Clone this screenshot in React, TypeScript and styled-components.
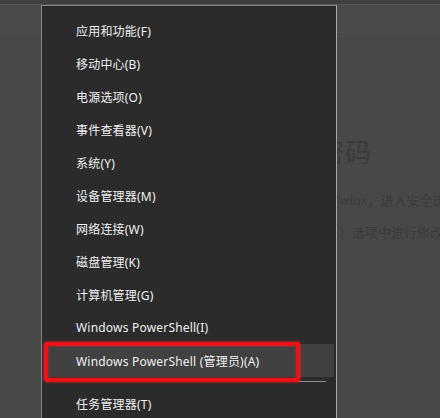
import styled, { createGlobalStyle } from "styled-components";

const GlobalStyle = createGlobalStyle`
  html, body {
    margin: 0;
    padding: 0;
    background: #484848;
  }
  body {
    font-family: "Noto Sans", "Noto Sans CJK SC", sans-serif;
  }
`;

const Page = styled.div`
  position: relative;
  width: 440px;
  height: 418px;
  overflow: hidden;
  background: #484848;
`;

const TopStrip = styled.div`
  height: 4px;
  background: #3f3f3f;
  border-bottom: 1px solid #555555;
`;

const Header = styled.div`
  height: 27px;
  background: #4a4a4a;
  border-bottom: 1px solid #4e4e4e;
`;

const Article = styled.div`
  display: flex;
  flex-direction: column;
  padding: 100px 0 0 318px;
  white-space: nowrap;
  color: #3a3a3a;
  font-family: "Noto Sans CJK SC", sans-serif;
`;

const Title = styled.div`
  font-size: 26px;
  line-height: 36px;
  letter-spacing: 1px;
`;

const Para = styled.div<{ $indent: number; $gap: number }>`
  font-size: 13px;
  line-height: 16px;
  margin-top: ${(p) => p.$gap}px;
  padding-left: ${(p) => p.$indent}px;
  color: #3b3b3b;
`;

const Menu = styled.div`
  position: absolute;
  left: 41px;
  top: 5px;
  width: 296px;
  height: 430px;
  background: #2b2b2b;
  border-left: 1px solid #858585;
  border-top: 1px solid #858585;
  border-right: 1px solid #a8a8a8;
  padding: 8px 2px 0 2px;
  box-sizing: border-box;
  display: flex;
  flex-direction: column;
`;

const Item = styled.div<{ $active?: boolean }>`
  position: relative;
  height: 33px;
  display: flex;
  align-items: center;
  padding-left: 31px;
  margin-left: 1px;
  font-size: 12px;
  letter-spacing: 0.2px;
  color: #f0f0f0;
  background: ${(p) => (p.$active ? "#414141" : "transparent")};
  white-space: nowrap;
`;

const Separator = styled.div`
  height: 1px;
  background: #8c8c8c;
  margin: 4px 8px 5px 16px;
`;

const Marker = styled.div`
  position: absolute;
  left: -1px;
  top: -2px;
  width: 256px;
  height: 40px;
  box-sizing: border-box;
  border: 4px solid #e8121a;
  border-radius: 3px;
  box-shadow: 0 0 3px #ff2020, inset 0 0 2px #ff2020;
`;

const items = [
  "应用和功能(F)",
  "移动中心(B)",
  "电源选项(O)",
  "事件查看器(V)",
  "系统(Y)",
  "设备管理器(M)",
  "网络连接(W)",
  "磁盘管理(K)",
  "计算机管理(G)",
  "Windows PowerShell(I)",
];

export default function App() {
  return (
    <Page>
      <GlobalStyle />
      <TopStrip />
      <Header />
      <Article>
        <Title>密码</Title>
        <Para $indent={8} $gap={23}>键winx，进入安全选项</Para>
        <Para $indent={8} $gap={16}>员）选项中进行修改</Para>
      </Article>
      <Menu>
        {items.map((label) => (
          <Item key={label}>{label}</Item>
        ))}
        <Item $active>
          Windows PowerShell (管理员)(A)
          <Marker />
        </Item>
        <Separator />
        <Item>任务管理器(T)</Item>
      </Menu>
    </Page>
  );
}
